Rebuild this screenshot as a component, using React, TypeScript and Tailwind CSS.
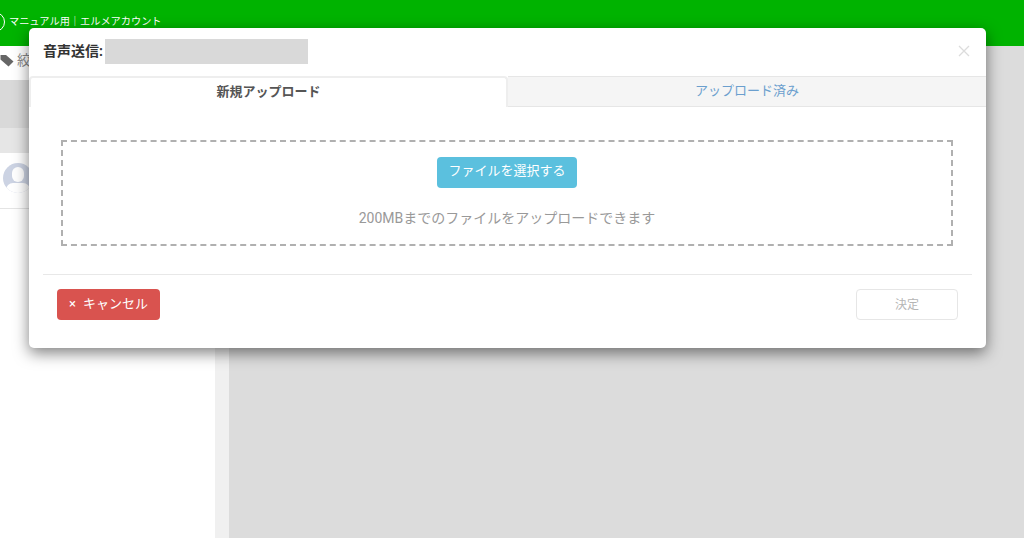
const jp = "font-['Roboto','Noto_Sans_CJK_JP',sans-serif]";

function Sidebar() {
  return (
    <aside className="w-[215px] shrink-0 bg-white">
      <div className="flex h-[34px] items-center gap-[3px] pb-[6px] pl-0 text-sm text-[#888]">
        <svg width="14" height="14" viewBox="0 0 14 14" className="shrink-0">
          <path d="M0.5 2h5.5L13.5 8.5 8.5 13.5 0.5 6.5z" fill="#666" />
        </svg>
        <span className="w-[12px] overflow-hidden whitespace-nowrap">絞り込み</span>
      </div>
      <div className="h-12 bg-[#d9d9d9]" />
      <div className="h-[25px] bg-[#e6e6e6]" />
      <div className="flex h-[56px] items-start border-b border-[#e4e4e4] pl-[3px] pt-[10px]">
        <div className="relative size-[30px] overflow-hidden rounded-full bg-[#ccd3e3]">
          <div className="absolute left-[9px] top-[4px] h-[15px] w-[12px] rounded-full bg-white" />
          <div className="absolute left-[3px] top-[20px] h-[14px] w-[24px] rounded-full bg-white" />
        </div>
      </div>
    </aside>
  );
}

function Modal() {
  return (
    <div className="absolute left-[29px] top-[28px] flex h-[320px] w-[957px] flex-col rounded-[5px] bg-white shadow-[0_5px_15px_rgba(0,0,0,0.5)]">
      <div className="flex h-[48px] shrink-0 items-center pb-[2px] pl-[14px] pr-[16px]">
        <span className="text-sm font-bold leading-5 text-[#333]">音声送信:</span>
        <div className="ml-[2px] h-[25px] w-[203px] bg-[#d9d9d9]" />
        <svg width="12" height="12" viewBox="0 0 12 12" className="ml-auto">
          <path d="M1 1l10 10M11 1L1 11" stroke="#dcdcdc" strokeWidth="1.3" fill="none" />
        </svg>
      </div>

      <div className="flex h-[31px] shrink-0 text-[13px]">
        <div className="flex w-[479px] items-center justify-center rounded-t border-x-2 border-t-2 border-[#eeeeee] bg-white pb-[2px] font-bold text-[#555]">
          新規アップロード
        </div>
        <div className="flex flex-1 items-center justify-center border-y border-[#e6e6e6] bg-[#f5f5f5] pb-px text-[#6b9fce]">
          アップロード済み
        </div>
      </div>

      <div className="pl-[32px] pr-[33px] pt-[33px]">
        <div className="flex h-[106px] flex-col items-center border-2 border-dashed border-[#b0b0b0] pt-[15px]">
          <button className="h-[31px] w-[140px] rounded bg-[#5bc0de] pb-[3px] text-[13px] text-white">
            ファイルを選択する
          </button>
          <p className="mt-[20px] text-sm leading-5 text-[#999]">200MBまでのファイルをアップロードできます</p>
        </div>
      </div>

      <div className="mx-[14px] mt-[28px] flex items-start justify-between border-t border-[#e8e8e8] px-[14px] pt-[14px]">
        <button className="flex h-[31px] w-[103px] items-center justify-center gap-[7px] rounded bg-[#d9534f] pb-[1px] text-[13px] text-white">
          <span>×</span>
          <span>キャンセル</span>
        </button>
        <button className="h-[31px] w-[102px] rounded border border-[#e6e6e6] bg-white text-xs text-[#b5b5b5]">
          決定
        </button>
      </div>
    </div>
  );
}

export default function App() {
  return (
    <div className={`relative flex h-[538px] w-[1024px] flex-col overflow-hidden ${jp}`}>
      <header className="flex h-[46px] shrink-0 items-center bg-[#00b300] pb-[2px] text-[10.2px] text-white">
        <div className="ml-[-15px] mr-[4px] size-[20px] shrink-0 rounded-full border border-white" />
        <span>マニュアル用｜エルメアカウント</span>
      </header>
      <div className="flex flex-1">
        <Sidebar />
        <div className="w-[14px] shrink-0 bg-[#f0f0f0]" />
        <main className="flex-1 bg-[#dcdcdc]" />
      </div>
      <Modal />
    </div>
  );
}
